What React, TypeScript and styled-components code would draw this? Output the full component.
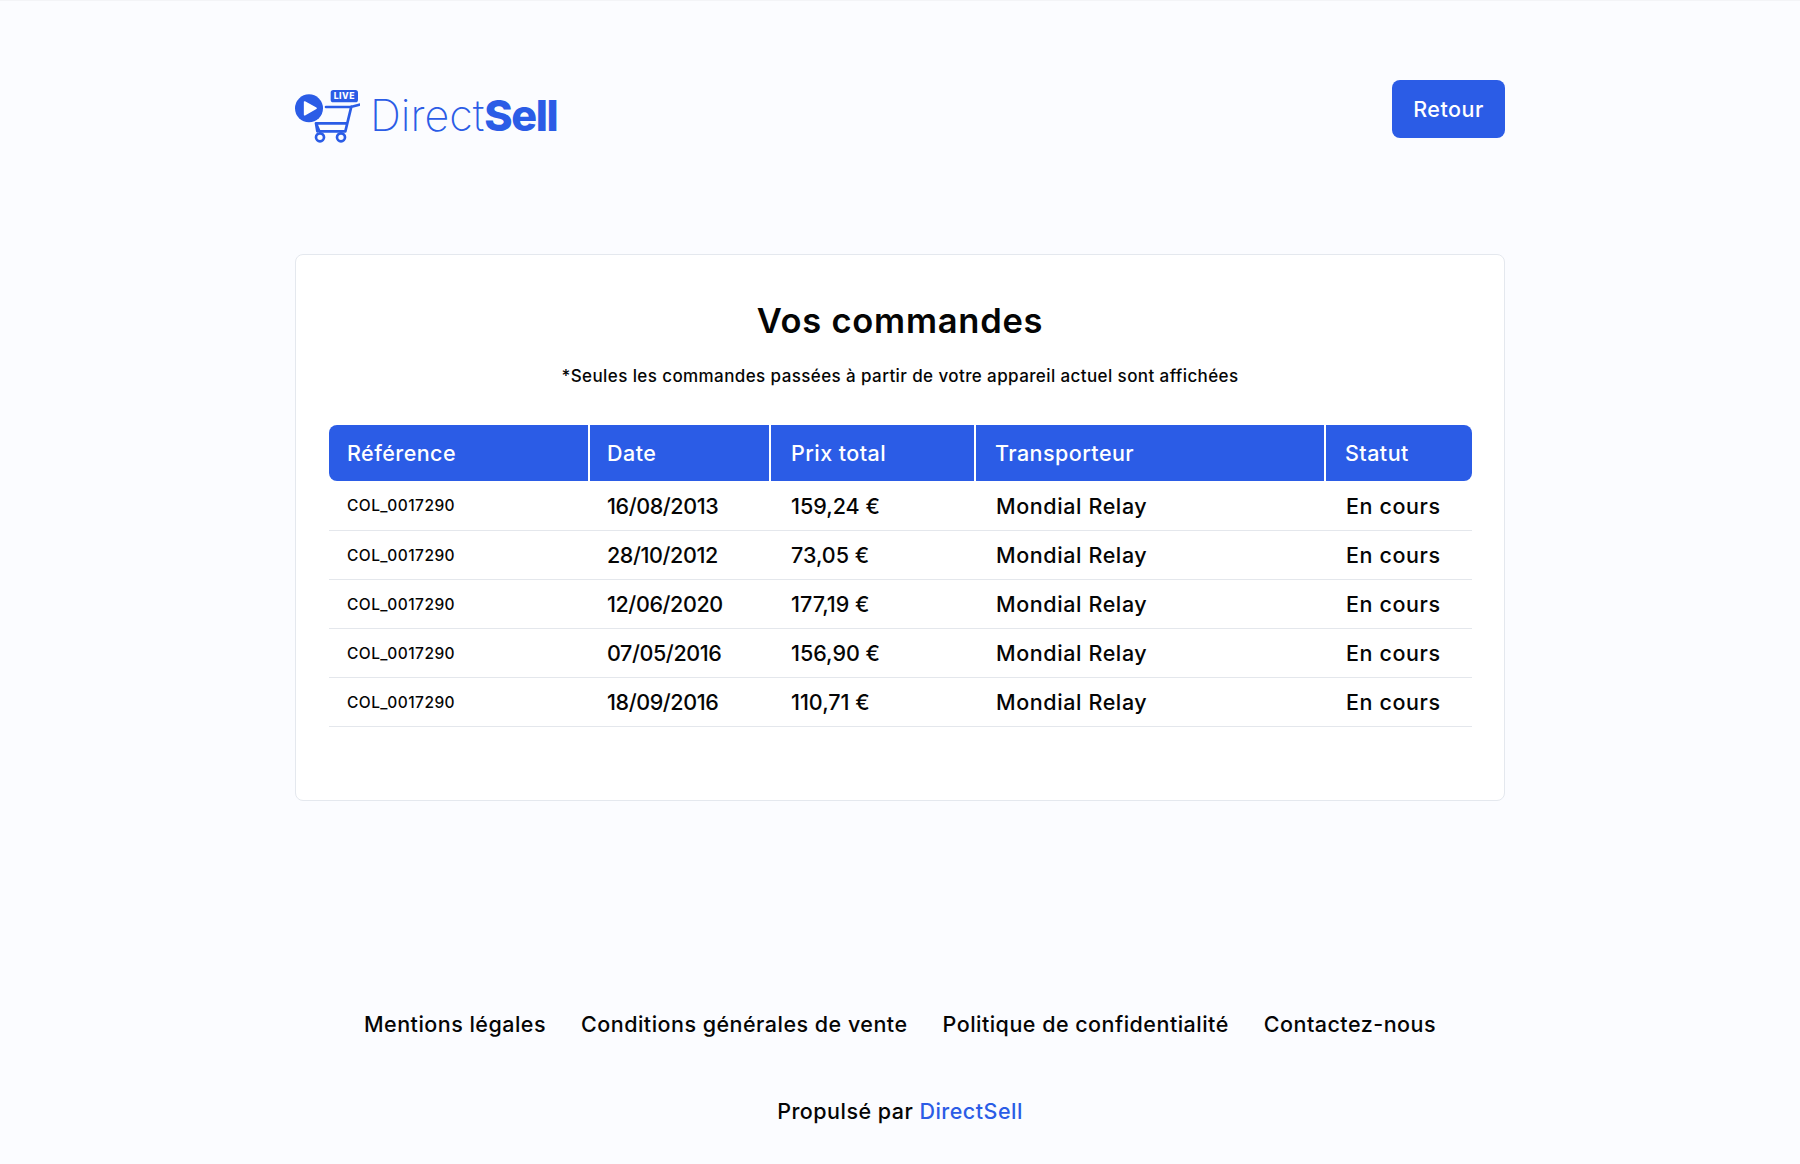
import styled, { createGlobalStyle } from 'styled-components'

const BLUE = '#2b5ce6'

const orders = [
  { ref: 'COL_0017290', date: '16/08/2013', price: '159,24 €' },
  { ref: 'COL_0017290', date: '28/10/2012', price: '73,05 €' },
  { ref: 'COL_0017290', date: '12/06/2020', price: '177,19 €' },
  { ref: 'COL_0017290', date: '07/05/2016', price: '156,90 €' },
  { ref: 'COL_0017290', date: '18/09/2016', price: '110,71 €' }
]

const footerLinks = [
  'Mentions légales',
  'Conditions générales de vente',
  'Politique de confidentialité',
  'Contactez-nous'
]

const GlobalStyle = createGlobalStyle`
  html, body {
    margin: 0;
    padding: 0;
    background: #fbfcff;
    color: #050505;
    font-family: Inter, "Liberation Sans", sans-serif;
  }
  body {
    border-top: 1px solid #f3f4f7;
  }
`

const Page = styled.div`
  width: 1210px;
  height: 1163px;
  margin: 0 auto;
  display: flex;
  flex-direction: column;
`

const Header = styled.header`
  display: flex;
  justify-content: space-between;
  align-items: flex-start;
  padding-top: 79px;
`

const Logo = styled.div`
  display: flex;
  align-items: center;
  gap: 10px;
  margin-top: 8px;
`

const Wordmark = styled.div`
  color: ${BLUE};
  font-size: 43px;
  font-weight: 200;
  line-height: 56px;
  margin-top: -1px;
  b {
    font-weight: 800;
    letter-spacing: -1.4px;
  }
`

const BackButton = styled.button`
  width: 113px;
  height: 58px;
  border: 0;
  border-radius: 8px;
  background: ${BLUE};
  color: #fff;
  font: 500 21.5px Inter, sans-serif;
  letter-spacing: 0.5px;
`

const Card = styled.section`
  box-sizing: border-box;
  height: 547px;
  margin-top: 111px;
  padding: 47px 33px 0;
  background: #fff;
  border: 1px solid #e4e8ee;
  border-radius: 8px;
`

const Title = styled.h1`
  margin: 0;
  text-align: center;
  font-size: 34.5px;
  line-height: 38px;
  font-weight: 600;
  letter-spacing: 0.75px;
`

const Note = styled.p`
  margin: 25px 0 0;
  text-align: center;
  font-size: 17px;
  line-height: 22px;
  font-weight: 500;
  letter-spacing: 0.4px;
`

const Table = styled.table`
  width: 1143px;
  margin-top: 38px;
  border-collapse: separate;
  border-spacing: 0;
  table-layout: fixed;
`

const Head = styled.th<{ $inset: number }>`
  height: 56px;
  padding: 0 0 0 ${({ $inset }) => $inset}px;
  box-sizing: border-box;
  background: ${BLUE};
  color: #fff;
  text-align: left;
  font-size: 21.5px;
  font-weight: 500;
  letter-spacing: 0.45px;
  border-left: 2px solid #fff;
  &:first-child {
    border-left: 0;
    border-radius: 8px 0 0 8px;
  }
  &:last-child {
    border-radius: 0 8px 8px 0;
  }
`

const Cell = styled.td`
  height: 49px;
  box-sizing: border-box;
  padding: 0 0 0 22px;
  border-bottom: 1px solid #e4e7ec;
  font-size: 21.5px;
  font-weight: 500;
  letter-spacing: 0.6px;
  white-space: nowrap;
`

const FirstRowGap = styled.tr`
  td {
    height: 50px;
  }
`

const RefCell = styled(Cell)`
  padding-left: 18px;
  font-size: 15.5px;
  letter-spacing: 0.45px;
`

const DateCell = styled(Cell)`
  padding-left: 19px;
  letter-spacing: -0.4px;
`

const PriceCell = styled(Cell)`
  letter-spacing: 0;
`

const Footer = styled.footer`
  margin-top: 209px;
  display: flex;
  flex-direction: column;
  align-items: center;
`

const FooterNav = styled.nav`
  display: flex;
  gap: 35px;
`

const FooterLink = styled.a`
  font-size: 21.5px;
  line-height: 28px;
  font-weight: 500;
  letter-spacing: 0.48px;
`

const Powered = styled.div`
  margin-top: 59px;
  font-size: 21.5px;
  line-height: 28px;
  font-weight: 500;
  letter-spacing: 0.48px;
  a {
    color: ${BLUE};
  }
`

const CartLogo = () => (
  <svg width="65" height="54" viewBox="45 58 195 160" fill="none">
    <circle cx="87" cy="115" r="42" fill={BLUE} />
    <path d="M74 96 L74 134 L108 115 Z" fill="#fff" stroke="#fff" strokeWidth="5" strokeLinejoin="round" />
    <rect x="152" y="60" width="82" height="37" rx="8" fill={BLUE} />
    <text x="193" y="88" textAnchor="middle" fill="#fff" fontFamily="Inter, sans-serif" fontWeight="800" fontSize="26" letterSpacing="1.5">LIVE</text>
    <path
      d="M138 111 H212 L238 104 M214 110 L196 184 H118 L108 160 H200 M108 160 L112 184"
      stroke={BLUE}
      strokeWidth="8"
      strokeLinecap="round"
      strokeLinejoin="round"
    />
    <circle cx="120" cy="202" r="12" stroke={BLUE} strokeWidth="8" fill="none" />
    <circle cx="183" cy="202" r="12" stroke={BLUE} strokeWidth="8" fill="none" />
  </svg>
)

export default function App() {
  return (
    <>
      <GlobalStyle />
      <Page>
        <Header>
          <Logo>
            <CartLogo />
            <Wordmark>
              Direct<b>Sell</b>
            </Wordmark>
          </Logo>
          <BackButton>Retour</BackButton>
        </Header>
        <Card>
          <Title>Vos commandes</Title>
          <Note>*Seules les commandes passées à partir de votre appareil actuel sont affichées</Note>
          <Table>
            <colgroup>
              <col width="259" />
              <col width="181" />
              <col width="205" />
              <col width="350" />
              <col width="148" />
            </colgroup>
            <thead>
              <tr>
                <Head $inset={18}>Référence</Head>
                <Head $inset={17}>Date</Head>
                <Head $inset={20}>Prix total</Head>
                <Head $inset={19}>Transporteur</Head>
                <Head $inset={19}>Statut</Head>
              </tr>
            </thead>
            <tbody>
              {orders.map((order, index) => {
                const Row = index === 0 ? FirstRowGap : 'tr'
                return (
                  <Row key={order.date}>
                    <RefCell>{order.ref}</RefCell>
                    <DateCell>{order.date}</DateCell>
                    <PriceCell>{order.price}</PriceCell>
                    <Cell>Mondial Relay</Cell>
                    <Cell>En cours</Cell>
                  </Row>
                )
              })}
            </tbody>
          </Table>
        </Card>
        <Footer>
          <FooterNav>
            {footerLinks.map((link) => (
              <FooterLink key={link}>{link}</FooterLink>
            ))}
          </FooterNav>
          <Powered>
            Propulsé par <a>DirectSell</a>
          </Powered>
        </Footer>
      </Page>
    </>
  )
}
